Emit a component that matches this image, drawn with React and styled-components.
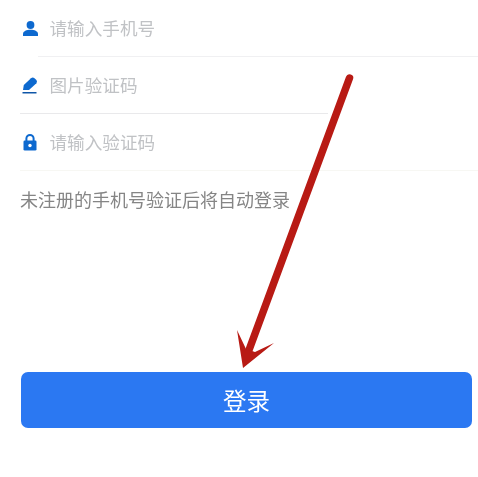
import React from 'react';
import styled, { createGlobalStyle } from 'styled-components';

const Global = createGlobalStyle`
  html, body { margin: 0; padding: 0; background: #fff; }
  body { font-family: "Liberation Sans", "Noto Sans CJK SC", sans-serif; }
`

const Page = styled.div`
  position: relative;
  width: 478px;
  height: 477px;
  overflow: hidden;
  background: #fff;
  filter: blur(0.6px);
`

const Form = styled.div`
  display: flex;
  flex-direction: column;
  padding-left: 20px;
`

const Row = styled.div`
  display: flex;
  align-items: center;
  height: 56px;
  gap: 9.5px;
  padding-top: 1px;
  box-sizing: border-box;
`

const Divider = styled.div`
  height: 1px;
  margin-left: ${props => props.$inset}px;
  margin-right: ${props => props.$cut}px;
  background: ${props => props.$color};
`

const IconBox = styled.div`
  width: 20px;
  height: 19px;
  display: flex;
  align-items: center;
  justify-content: center;
  flex-shrink: 0;
`

const Placeholder = styled.span`
  font-size: 17.6px;
  line-height: 20px;
  color: #c0c2c5;
`

const Hint = styled.p`
  margin: 19px 0 0;
  font-size: 18px;
  line-height: 22px;
  color: #858585;
`

const Submit = styled.button`
  display: block;
  width: 451px;
  height: 56px;
  margin: 160px 0 0 1px;
  border: none;
  border-radius: 7px;
  background: #2b78f2;
  color: #fff;
  font-family: inherit;
  font-size: 23.5px;
  padding: 0;
`

const ArrowLayer = styled.svg`
  position: absolute;
  left: 0;
  top: 0;
  width: 478px;
  height: 477px;
  pointer-events: none;
`

const UserIcon = () => (
  <svg width="17" height="16" viewBox="0 0 17 16">
    <circle cx="8.5" cy="4" r="3.9" fill="#0d69cf" />
    <path d="M1 15 v-2 C1 10.2 4.6 8.8 8.5 8.8 s7.5 1.4 7.5 4.2 v2 z" fill="#0d69cf" />
  </svg>
)

const PenIcon = () => (
  <svg width="16" height="17" viewBox="0 0 16 17">
    <path d="M1 13 L1.800 8 L9 1.200 Q10.600 0 12.200 1 L14.400 3 Q15.600 4.600 14.400 6.200 L7 13 Z" fill="#0d69cf" />
    <rect x="0.500" y="15" width="14" height="1.500" fill="#0f56a8" />
  </svg>
)

const LockIcon = () => (
  <svg width="14" height="17" viewBox="0 0 14 17">
    <path d="M3.400 7 V4.600 a3.600 3.600 0 0 1 7.200 0 V7" fill="none" stroke="#0d69cf" strokeWidth="2" />
    <rect x="0.500" y="6.500" width="13" height="10" rx="1.300" fill="#0d69cf" />
    <circle cx="7" cy="11.500" r="1.700" fill="#fff" />
  </svg>
)

const fields = [
  { icon: <UserIcon />, text: '请输入手机号', color: '#f0f0f2', inset: 18, cut: 0 },
  { icon: <PenIcon />, text: '图片验证码', color: '#e9e9eb', inset: 0, cut: 150 },
  { icon: <LockIcon />, text: '请输入验证码', color: '#f7f7f3', inset: 0, cut: 0 },
]

export default function App() {
  return (
    <Page>
      <Global />
      <Form>
        {fields.map(f => (
          <React.Fragment key={f.text}>
            <Row>
              <IconBox>{f.icon}</IconBox>
              <Placeholder>{f.text}</Placeholder>
            </Row>
            <Divider $color={f.color} $inset={f.inset} $cut={f.cut} />
          </React.Fragment>
        ))}
        <Hint>未注册的手机号验证后将自动登录</Hint>
        <Submit>登录</Submit>
      </Form>
      <ArrowLayer viewBox="0 0 478 477">
        <path d="M349.500 78 L249 350" stroke="#b81a14" strokeWidth="7.500" strokeLinecap="round" fill="none" />
        <path d="M243 368 L237 330 L246 349 L255 352 L274 343 Z" fill="#b81a14" />
      </ArrowLayer>
    </Page>
  );
}
